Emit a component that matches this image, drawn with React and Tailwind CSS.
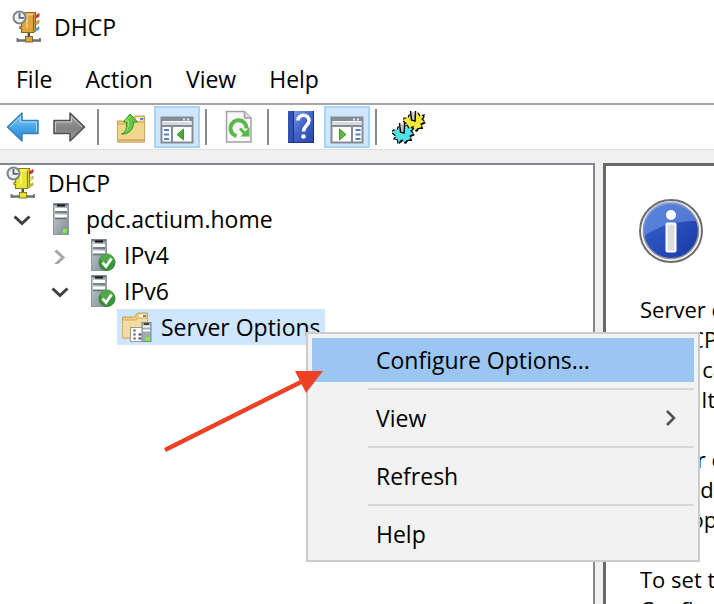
import React from "react";

const FONT = "font-['Open_Sans','Noto_Sans',sans-serif]";

function DhcpIcon({ body, edge, bright, tabs }) {
  return (
    <svg width="30" height="34" viewBox="0 0 30 34" className="shrink-0" aria-hidden="true">
      <path d="M16.800 22v5" stroke="#4d4d4d" strokeWidth="2.500" />
      <path d="M5.500 28v4M28 28v4" stroke="#7d8285" strokeWidth="2" />
      <path d="M5 30.500h23.500" stroke="#6b7073" strokeWidth="2.500" />
      <rect x="13.500" y="26.500" width="7" height="5.500" fill={body} stroke={edge} />
      <path d="M11 4.500 13 2.500h10.500V21l-2 1.500h-12v-4H8v-2h1.500V12H11z" fill={body} stroke={edge} strokeWidth="1.200" />
      <path d="M15 5v13M14 4.500h7" stroke={bright} strokeWidth="2" opacity=".8" />
      <path d="M21.500 4.500V21" stroke={edge} strokeWidth="1.200" />
      <path d="M23.500 6 27 3.500v3L23.500 8z" fill={tabs[0]} stroke={tabs[0]} />
      <path d="M23.500 12.500 27 10v3l-3.500 2z" fill={tabs[1]} stroke={edge} strokeWidth=".6" />
      <path d="M23.500 19 27 16.500v3L23.500 21z" fill={tabs[2]} stroke={tabs[2]} strokeWidth=".6" />
      <circle cx="7.500" cy="7.500" r="6" fill="#eef1f3" stroke="#7b858c" strokeWidth="2" />
      <path d="M7.500 3v4.800H12" fill="none" stroke="#59646d" strokeWidth="1.800" />
    </svg>
  );
}

function Arrow({ forward }) {
  return (
    <svg width="34" height="32" viewBox="0 0 34 32" aria-hidden="true">
      <defs>
        <linearGradient id={forward ? "fwd" : "back"} x1="0" y1="0" x2="0" y2="1">
          <stop offset="0" stopColor={forward ? "#a8a8a8" : "#8fd0f7"} />
          <stop offset=".55" stopColor={forward ? "#828282" : "#45a3e6"} />
          <stop offset="1" stopColor={forward ? "#9b9b9b" : "#2f86d3"} />
        </linearGradient>
      </defs>
      <path
        d={forward ? "M32.500 16 18 2v7.500H2v13h16V30z" : "M1.500 16 16 2v7.500h16v13H16V30z"}
        fill={forward ? "url(#fwd)" : "url(#back)"}
        stroke={forward ? "#505050" : "#397fb5"}
        strokeWidth="1.500"
        strokeLinejoin="round"
      />
      <path
        d={forward ? "M3.500 21V11h16V5.500L30 16" : "M4 16 14.500 5.500V11h16v10"}
        fill="none"
        stroke={forward ? "#c9c9c9" : "#a9dcfa"}
        strokeWidth="1"
      />
    </svg>
  );
}

function UpFolder() {
  return (
    <svg width="30" height="34" viewBox="0 0 30 34" aria-hidden="true">
      <path d="M1.500 11h14l3-5h10v26h-27z" fill="#ecc878" stroke="#c59b4a" />
      <rect x="20" y="7.500" width="7" height="3" fill="#fff" />
      <path d="M24 9h3" stroke="#4a8ede" strokeWidth="2" />
      <path d="M1.500 14h15l2-2h10v20h-27z" fill="#f2d58f" stroke="#cfa758" />
      <path d="M2 30h26" stroke="#d8b066" strokeWidth="2" />
      <path
        d="M5.500 24c5-2 5-6 5-12H7.500L14 4l7.500 8H17.500c0 7-3 10.500-9 12z"
        fill="#62c83f"
        stroke="#3b9427"
        strokeLinejoin="round"
      />
      <path d="M14 6.500 9.500 11h3c0 5 0 7-2.500 10" fill="none" stroke="#a4e883" />
    </svg>
  );
}

function PaneIcon({ right }) {
  return (
    <svg width="34" height="28" viewBox="0 0 34 28" className="mt-1.5" aria-hidden="true">
      <rect x="1.500" y="1.500" width="31" height="25" fill="#fff" stroke="#858b94" strokeWidth="2" />
      <path d="M2 3.500h30" stroke="#868d98" strokeWidth="3" />
      <path d="M23 3.500h2M27 3.500h2" stroke="#e8edf4" strokeWidth="2" />
      <path d="M2 7.500h30" stroke="#d5dae0" strokeWidth="3" />
      <path d="M2 10h30" stroke="#858b94" strokeWidth="2" />
      {right ? (
        <>
          <path d="M22 10v16" stroke="#858b94" strokeWidth="2" />
          <path d="M25.500 14h5M25.500 18.500h5M25.500 23h5" stroke="#4f82bd" strokeWidth="2" />
          <path d="M9.500 13v11l6.500-5.500z" fill="#63b944" stroke="#3f9430" />
        </>
      ) : (
        <>
          <path d="M12 10v16" stroke="#858b94" strokeWidth="2" />
          <path d="M4 14h5M4 18.500h5M4 23h5" stroke="#4f82bd" strokeWidth="2" />
          <path d="M23.500 13v11L17 18.500z" fill="#49ae32" stroke="#3f9430" />
        </>
      )}
    </svg>
  );
}

function RefreshIcon() {
  return (
    <svg width="28" height="34" viewBox="0 0 28 34" aria-hidden="true">
      <path d="M1.500 1.500h18l6.500 6.500v24H1.500z" fill="#f7f7f7" stroke="#a3a3a3" strokeWidth="1.500" />
      <path d="M19.500 1.500V8H26" fill="#ddd" stroke="#a3a3a3" strokeWidth="1.500" />
      <path d="M11.500 26A8 8 0 1 1 21.500 18.500" fill="none" stroke="#56b948" strokeWidth="4" />
      <path d="M24.500 17v9.500h-9z" fill="#56b948" />
      <path d="M15 18.500l7 7" stroke="#56b948" strokeWidth="3" />
    </svg>
  );
}

function HelpIcon() {
  return (
    <svg width="28" height="34" viewBox="0 0 28 34" aria-hidden="true">
      <defs>
        <linearGradient id="book" x1="0" y1="0" x2="1" y2="1">
          <stop offset="0" stopColor="#8aa6ea" />
          <stop offset=".5" stopColor="#4464c8" />
          <stop offset="1" stopColor="#2845a8" />
        </linearGradient>
      </defs>
      <rect x="1" y="1" width="26" height="32" fill="url(#book)" />
      <rect x="1" y="1" width="5" height="32" fill="#3452b4" />
      <path d="M6.500 1v32M26.500 1v32M1 32.500h26" stroke="#1b3182" />
      <path d="M11 10.500c0-7 11-7 11 0 0 5-5.500 5-5.500 11" fill="none" stroke="#fff" strokeWidth="3.500" />
      <circle cx="16.500" cy="26.500" r="2.300" fill="#fff" />
    </svg>
  );
}

const GEAR =
  "M-11 0-7 3-9 6-6 6-5 10-1 7 2 10 4 7 8 7 7 3 11 1 8-2 10-6 6-5 4-8 1-6-5-6-6-3-10-3z";

function Gear({ x, y, color }) {
  return (
    <g transform={`translate(${x} ${y})`}>
      <path d={GEAR} transform="translate(1 1)" fill="#000" />
      <path d={GEAR} fill={color} stroke="#000" strokeWidth="1.200" strokeDasharray="4 2" />
      <path d="M-4-9h5v8h-4z" fill="#fff" />
      <path d="M-3.500-10-2.500-1 1 0 1.500-10" fill="none" stroke="#000" strokeWidth="1.500" />
      <path d="M-1-9v7" stroke="#b5b5b5" strokeWidth="1.500" />
    </g>
  );
}

function GearsIcon() {
  return (
    <svg width="34" height="34" viewBox="0 0 34 34" aria-hidden="true">
      <Gear x="22" y="11" color="#f2e83c" />
      <Gear x="11" y="23" color="#50e0e6" />
    </svg>
  );
}

function ServerIcon({ ok }) {
  return (
    <svg width="26" height="34" viewBox="0 0 26 34" className="shrink-0" aria-hidden="true">
      <defs>
        <linearGradient id="tower" x1="0" y1="0" x2="1" y2="1">
          <stop offset="0" stopColor="#c6d0d6" />
          <stop offset="1" stopColor="#7f8a91" />
        </linearGradient>
      </defs>
      <rect x="1.500" y="1.500" width="15" height="31" fill="url(#tower)" stroke="#8d979d" />
      <path d="M2 2.500h14" stroke="#69747b" strokeWidth="2" />
      <path d="M5 3.500h8" stroke="#111" strokeWidth="2" />
      <path d="M3 7.500h12M3 14h12" stroke="#fff" strokeWidth="3" />
      <path d="M3 10h12M3 16.500h12" stroke="#66727a" strokeWidth="1.500" />
      {ok ? (
        <>
          <circle cx="17" cy="24.500" r="8" fill="#3b9637" stroke="#2e7a2b" />
          <path d="M10 22a7 7 0 0 1 14 0c-5 3-9 3-14 0z" fill="#63b257" opacity=".6" />
          <path d="M12.500 24.500l3.500 4 5.500-8" fill="none" stroke="#fff" strokeWidth="2.800" />
        </>
      ) : (
        <rect x="11" y="27" width="4" height="4" fill="#7df03c" />
      )}
    </svg>
  );
}

function OptionsFolder() {
  return (
    <svg width="32" height="32" viewBox="0 0 32 32" className="shrink-0" aria-hidden="true">
      <path d="M1.500 6h12l3-4h10v25h-25z" fill="#edca7c" stroke="#c89f4e" />
      <rect x="18" y="3.500" width="7" height="3" fill="#fff" />
      <path d="M22 5h3" stroke="#4a8ede" strokeWidth="2" />
      <path d="M1.500 9h14l2-2h9v20h-25z" fill="#f5dc9c" stroke="#d3ae61" />
      <rect x="9.500" y="16.500" width="14" height="14" fill="#fff" stroke="#999" />
      <path d="M12.500 19.500h2M12.500 23.500h2M12.500 27.500h2M17.500 23.500h3M17.500 27.500h3" stroke="#4a4a72" strokeWidth="2" />
      <rect x="21" y="11.500" width="9" height="19" fill="#a4adb3" stroke="#7d878d" />
      <path d="M23 13h5" stroke="#222" strokeWidth="1.500" />
      <path d="M22 15.500h7M22 19.500h7" stroke="#fff" strokeWidth="2" />
      <rect x="25" y="26" width="4" height="4" fill="#7df03c" />
    </svg>
  );
}

function Chevron({ open }) {
  return (
    <svg width="18" height="18" viewBox="0 0 18 18" aria-hidden="true">
      <path
        d={open ? "M1.500 6.500 9 13.500l7.500-7" : "M4.500 4.500 12 11.500l-7.500 7"}
        fill="none"
        stroke={open ? "#404040" : "#a6a6a6"}
        strokeWidth="3"
        className="overflow-visible"
      />
    </svg>
  );
}

function Toggle({ open, name }) {
  return (
    <button type="button" aria-label={name} aria-expanded={open} className="flex w-5 shrink-0 justify-center">
      <Chevron open={open} />
    </button>
  );
}

function ToolButton({ label, active, children }) {
  return (
    <button
      type="button"
      aria-label={label}
      className={`flex h-[42px] w-[46px] shrink-0 items-center justify-center border-2 ${
        active ? "border-[#a8d5fb] bg-[#cfe6fc]" : "border-transparent"
      }`}
    >
      {children}
    </button>
  );
}

function ToolSeparator() {
  return <div className="mr-[9px] ml-[5px] h-9 w-0.5 shrink-0 bg-[#8c8c8c]" />;
}

function MenuItem({ children, active, submenu }) {
  return (
    <button
      type="button"
      role="menuitem"
      className={`flex h-11 w-full items-center justify-between pr-4 pl-16 text-left ${active ? "bg-[#9bc6f2]" : ""}`}
    >
      <span>{children}</span>
      {submenu && (
        <svg width="14" height="18" viewBox="0 0 14 18" aria-hidden="true">
          <path d="M3 2l7 7-7 7" fill="none" stroke="#505050" strokeWidth="2.500" />
        </svg>
      )}
    </button>
  );
}

function MenuSeparator() {
  return <div role="separator" className="my-1.5 ml-14 h-0.5 bg-[#d7d7d7]" />;
}

const INFO_LINES = [
  "Server options are settings that",
  "a DHCP server hands out, and",
  "these can be changed when",
  "used. It is possible to set them.",
  "",
  "Server options can have a",
  "value defined for each",
  "type option that is set.",
  "",
  "To set the server options, click",
  "Configure Options.",
];

export default function App() {
  return (
    <div className={`relative flex h-screen flex-col overflow-hidden bg-white text-[23px] leading-[30px] text-black ${FONT}`}>
      <header className="flex h-[54px] shrink-0 items-center gap-3 pl-3">
        <DhcpIcon body="#dfa640" edge="#8a6326" bright="#f6cf78" tabs={["#d8343a", "#e9b54c", "#38a7d8"]} />
        <h1>DHCP</h1>
      </header>
      <nav className="flex h-[49px] shrink-0 items-center gap-px">
        {["File", "Action", "View", "Help"].map((name) => (
          <button key={name} type="button" className="px-4">
            {name}
          </button>
        ))}
      </nav>
      <div className="flex h-[47px] shrink-0 items-center border-t-2 border-b border-t-[#a6a6a6] border-b-[#e0e0e0]">
        <ToolButton label="Back"><Arrow /></ToolButton>
        <ToolButton label="Forward"><Arrow forward /></ToolButton>
        <ToolSeparator />
        <ToolButton label="Up one level"><UpFolder /></ToolButton>
        <ToolButton label="Show console tree" active><PaneIcon /></ToolButton>
        <ToolSeparator />
        <ToolButton label="Refresh"><RefreshIcon /></ToolButton>
        <ToolSeparator />
        <ToolButton label="Help"><HelpIcon /></ToolButton>
        <ToolButton label="Show action pane" active><PaneIcon right /></ToolButton>
        <ToolSeparator />
        <ToolButton label="Configure"><GearsIcon /></ToolButton>
      </div>
      <div className="flex min-h-0 flex-1 gap-2 bg-[#f0f0f0] pt-[13px]">
        <ul className="w-5/6 border-t-2 border-r-2 border-[#828790] bg-white">
          <li className="flex h-9 items-center gap-3 pl-1.5">
            <DhcpIcon body="#e8e337" edge="#85801c" bright="#ffff66" tabs={["#e0262f", "#f4f08a", "#b9b432"]} />
            DHCP
          </li>
          <li className="flex h-9 items-center pl-3">
            <Toggle open name="pdc.actium.home" />
            <span className="ml-5 flex items-center gap-2"><ServerIcon />pdc.actium.home</span>
          </li>
          <li className="flex h-9 items-center pl-[50px]">
            <Toggle open={false} name="IPv4" />
            <span className="ml-5 flex items-center gap-2"><ServerIcon ok />IPv4</span>
          </li>
          <li className="flex h-9 items-center pl-[50px]">
            <Toggle open name="IPv6" />
            <span className="ml-5 flex items-center gap-2"><ServerIcon ok />IPv6</span>
          </li>
          <li className="flex h-9 items-center pl-[117px]">
            <span className="flex h-9 items-center gap-2 bg-[#cfe6ff] pr-1 pl-1">
              <OptionsFolder />
              Server Options
            </span>
          </li>
        </ul>
        <main className="min-w-0 flex-1 overflow-hidden border-t-[3px] border-l-[3px] border-[#696969] bg-white pt-8 pl-8">
          <svg width="66" height="66" viewBox="0 0 66 66" role="img" aria-label="Information">
            <defs>
              <linearGradient id="disc" x1="0" y1="0" x2="1" y2="1">
                <stop offset="0" stopColor="#3a68cf" />
                <stop offset="1" stopColor="#1737a8" />
              </linearGradient>
            </defs>
            <circle cx="33" cy="33" r="31" fill="#f5f5f5" stroke="#6d6d6d" strokeWidth="2" />
            <circle cx="33" cy="33" r="27.500" fill="url(#disc)" stroke="#8b8b93" strokeWidth="1.500" />
            <path d="M6 38A27 27 0 0 1 58 23C38 23 20 28 6 38z" fill="#6f97e4" opacity=".6" />
            <circle cx="33" cy="17" r="5" fill="#fff" />
            <rect x="28.500" y="25.500" width="9" height="28" rx="1" fill="#ddd" stroke="#fff" strokeWidth="2" />
          </svg>
          <div className="mt-[30px] ml-0.5 text-[22px] leading-[30px] whitespace-nowrap">
            {INFO_LINES.map((line, i) => (
              <p key={i} className="h-[30px]">{line}</p>
            ))}
          </div>
        </main>
      </div>
      <div role="menu" className="absolute top-[332px] left-[306px] w-[394px] border-2 border-[#cccccc] bg-[#f2f2f2] p-1">
        <MenuItem active>Configure Options...</MenuItem>
        <MenuSeparator />
        <MenuItem submenu>View</MenuItem>
        <MenuSeparator />
        <MenuItem>Refresh</MenuItem>
        <MenuSeparator />
        <MenuItem>Help</MenuItem>
      </div>
      <svg className="pointer-events-none absolute top-[368px] left-[160px]" width="166" height="88" viewBox="0 0 166 88" aria-hidden="true">
        <path d="M5 82 145 12" stroke="#ee4226" strokeWidth="4.500" />
        <path d="M135 3h28l-17 22z" fill="#ee4226" />
      </svg>
    </div>
  );
}
